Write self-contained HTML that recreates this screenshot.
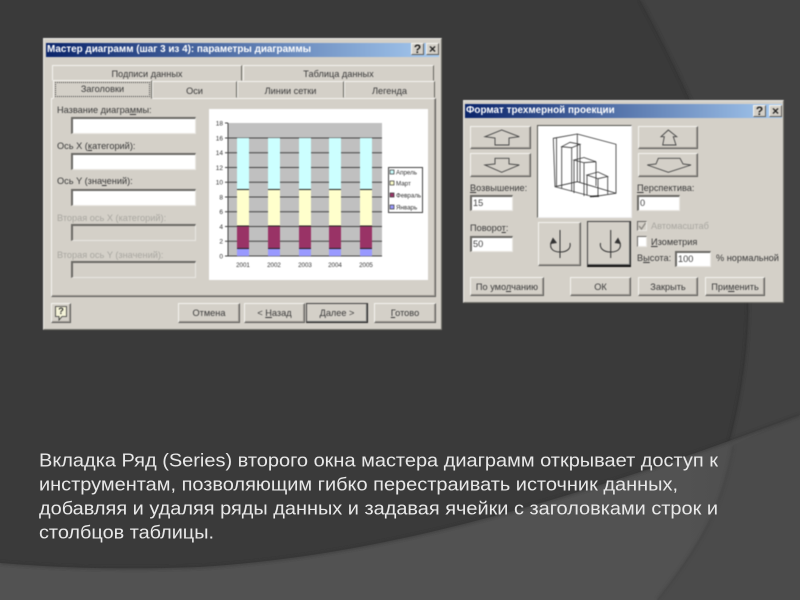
<!DOCTYPE html>
<html lang="ru">
<head>
<meta charset="utf-8">
<title>Слайд</title>
<style>
html,body{margin:0;padding:0;width:800px;height:600px;overflow:hidden;background:#3a3a3a}
#bg{position:absolute;left:0;top:0}
#ui{position:absolute;left:0;top:0;width:800px;height:600px;filter:blur(.6px);font-family:"Liberation Sans",sans-serif;font-size:9.2px;color:#3a3a3a}
#ui div{position:absolute;box-sizing:border-box}
.dlg{background:#d4d0c8;border:1px solid;border-color:#ecebe6 #77756f #77756f #ecebe6}
.tb{color:#fff;font-weight:bold;font-size:9.9px;line-height:14px;padding-left:1px;white-space:nowrap;overflow:hidden}
.b{background:#d4d0c8;border:1px solid;border-color:#f4f3ef #5f5e5a #5f5e5a #f4f3ef;box-shadow:inset -1px -1px 0 #a09d96;text-align:center;white-space:nowrap}
.d{border:1px solid;border-color:#444 #222 #222 #444;box-shadow:inset -1px -1px 0 #777}
.i{background:#fff;border:1px solid;border-color:#6b6a66 #e9e7e2 #e9e7e2 #6b6a66;border-top-width:2px;border-left-width:2px;padding-left:1px;line-height:13px;color:#444}
.g{background:#d4d0c8}
.l{white-space:nowrap;line-height:11px}
.n{color:#a9a7a1}
.t{background:#d4d0c8;border:1px solid;border-color:#f4f3ef #67665f #d4d0c8 #f4f3ef;text-align:center;white-space:nowrap}
.x{background:#d4d0c8;border:1px solid;border-color:#f4f3ef #5f5e5a #5f5e5a #f4f3ef;text-align:center;font-weight:bold;line-height:11px;font-size:12px;color:#222}
#ui svg{position:absolute;left:0;top:0}
#tx{position:absolute;left:0;top:0}
</style>
</head>
<body>
<svg id="bg" width="800" height="600" viewBox="0 0 800 600">
<defs>
<filter id="f1"><feGaussianBlur stdDeviation="1.6"/></filter>
<clipPath id="cb"><path d="M0,563C60,568 120,570 200,567C400,555 600,490 800,415L800,600L0,600Z"/></clipPath>
<linearGradient id="gb" x1="0" x2="1" y1="0" y2="0"><stop offset="0" stop-color="#525252"/><stop offset=".85" stop-color="#525252"/><stop offset="1" stop-color="#4c4c4c"/></linearGradient>
</defs>
<rect width="800" height="600" fill="#3a3a3a"/>
<path d="M640,0C700,110 750,230 748,310C746,400 720,510 657,600L800,600L800,0Z" fill="#424242"/>
<path d="M640,0C700,110 750,230 748,310C746,400 720,510 657,600" fill="none" stroke="#2f2f2f" stroke-width="1.5" filter="url(#f1)"/>
<path d="M0,563C60,568 120,570 200,567C400,555 600,490 800,415L800,600L0,600Z" fill="url(#gb)"/>
<g clip-path="url(#cb)"><path d="M733,445C720,510 700,545 657,600L800,600L800,415Z" fill="#4b4b4b"/>
<path d="M733,445C722,510 700,545 657,600" fill="none" stroke="#414141" stroke-width="1.5" filter="url(#f1)"/></g>
<path d="M0,563C60,568 120,570 200,567C400,555 600,490 800,415" fill="none" stroke="#303030" stroke-width="1.5" filter="url(#f1)"/>
</svg>

<div id="ui">
<!-- Dialog 1 -->
<div class="dlg" style="left:43px;top:38px;width:399px;height:292px"></div>
<div class="tb" style="left:46px;top:43px;width:393px;height:14px;background:linear-gradient(90deg,#0a246a,#a6caf0)">Мастер диаграмм (шаг 3 из 4): параметры диаграммы</div>
<div class="x" style="left:411px;top:43px;width:13px;height:12px">?</div>
<div class="x" style="left:426px;top:43px;width:13px;height:12px">×</div>

<div class="t" style="left:52px;top:65px;width:190px;height:16px;line-height:16px">Подписи данных</div>
<div class="t" style="left:243px;top:65px;width:191px;height:16px;line-height:16px">Таблица данных</div>
<div class="b" style="left:51px;top:98px;width:385px;height:199px;border-top-color:#f4f3ef"></div>
<div class="t" style="left:53px;top:80px;width:99px;height:19px;line-height:17px;z-index:2"><span style="position:absolute;left:1px;top:1px;width:95px;height:15px;border:1px dotted #444;box-sizing:border-box;line-height:13px">Заголовки</span></div>
<div class="t" style="left:152px;top:81px;width:85px;height:17px;line-height:18px">Оси</div>
<div class="t" style="left:237px;top:81px;width:107px;height:17px;line-height:18px">Линии сетки</div>
<div class="t" style="left:344px;top:81px;width:91px;height:17px;line-height:18px">Легенда</div>

<div class="l" style="left:57px;top:105px">Название диагра<u>м</u>мы:</div>
<div class="i" style="left:71px;top:117px;width:125px;height:17px"></div>
<div class="l" style="left:57px;top:141px">Ось X (<u>к</u>атегорий):</div>
<div class="i" style="left:71px;top:153px;width:125px;height:17px"></div>
<div class="l" style="left:57px;top:176px">Ось Y (зна<u>ч</u>ений):</div>
<div class="i" style="left:71px;top:189px;width:125px;height:17px"></div>
<div class="l n" style="left:57px;top:213px">Вторая ось X (категорий):</div>
<div class="i g" style="left:71px;top:224px;width:125px;height:17px"></div>
<div class="l n" style="left:57px;top:250px">Вторая ось Y (значений):</div>
<div class="i g" style="left:71px;top:261px;width:125px;height:17px"></div>

<div style="left:209px;top:109px;width:219px;height:171px;background:#fff"></div>
<div class="b" style="left:51px;top:303px;width:20px;height:20px"></div>

<svg width="800" height="600" viewBox="0 0 800 600" style="font-family:'Liberation Sans',sans-serif">
<rect x="228" y="123" width="154" height="133" fill="#c0c0c0"/>
<g stroke="#444" stroke-width="1">
<path d="M225,256H382M225,241.2H382M225,226.5H382M225,211.8H382M225,197H382M225,182.2H382M225,167.5H382M225,152.8H382M225,138H382M225,123H228" fill="none"/>
<path d="M228,123V256" fill="none"/>
</g>
<g>
<rect x="237" y="248" width="12" height="8" fill="#9999ff"/><rect x="237" y="226" width="12" height="22" fill="#993366"/><rect x="237" y="189" width="12" height="37" fill="#ffffcc"/><rect x="237" y="138" width="12" height="51" fill="#ccffff"/>
<rect x="268" y="248" width="12" height="8" fill="#9999ff"/><rect x="268" y="226" width="12" height="22" fill="#993366"/><rect x="268" y="189" width="12" height="37" fill="#ffffcc"/><rect x="268" y="138" width="12" height="51" fill="#ccffff"/>
<rect x="299" y="248" width="12" height="8" fill="#9999ff"/><rect x="299" y="226" width="12" height="22" fill="#993366"/><rect x="299" y="189" width="12" height="37" fill="#ffffcc"/><rect x="299" y="138" width="12" height="51" fill="#ccffff"/>
<rect x="329" y="248" width="12" height="8" fill="#9999ff"/><rect x="329" y="226" width="12" height="22" fill="#993366"/><rect x="329" y="189" width="12" height="37" fill="#ffffcc"/><rect x="329" y="138" width="12" height="51" fill="#ccffff"/>
<rect x="360" y="248" width="12" height="8" fill="#9999ff"/><rect x="360" y="226" width="12" height="22" fill="#993366"/><rect x="360" y="189" width="12" height="37" fill="#ffffcc"/><rect x="360" y="138" width="12" height="51" fill="#ccffff"/>
</g>
<path d="M237,248.500H249M268,248.500H280M299,248.500H311M329,248.500H341M360,248.500H372M237,226H249M268,226H280M299,226H311M329,226H341M360,226H372M237,189.500H249M268,189.500H280M299,189.500H311M329,189.500H341M360,189.500H372" stroke="#222" stroke-width="1"/>
<g font-size="6.5" fill="#333" text-anchor="end">
<text x="223" y="258.500">0</text><text x="223" y="243.500">2</text><text x="223" y="229">4</text><text x="223" y="214">6</text><text x="223" y="199.500">8</text><text x="223" y="184.500">10</text><text x="223" y="170">12</text><text x="223" y="155">14</text><text x="223" y="140.500">16</text><text x="223" y="125.500">18</text>
</g>
<g font-size="6.2" fill="#333" text-anchor="middle">
<text x="243" y="267">2001</text><text x="274" y="267">2002</text><text x="305" y="267">2003</text><text x="335" y="267">2004</text><text x="366" y="267">2005</text>
</g>
<rect x="388.500" y="167.500" width="34" height="45" fill="#fff" stroke="#444"/>
<rect x="390" y="170" width="4" height="4" fill="#ccffff" stroke="#333" stroke-width=".7"/>
<rect x="390" y="181" width="4" height="4" fill="#ffffcc" stroke="#333" stroke-width=".7"/>
<rect x="390" y="193" width="4" height="4" fill="#993366" stroke="#333" stroke-width=".7"/>
<rect x="390" y="205" width="4" height="4" fill="#9999ff" stroke="#333" stroke-width=".7"/>
<g font-size="6.2" fill="#333">
<text x="396" y="174.500">Апрель</text><text x="396" y="185.500">Март</text><text x="396" y="197.500">Февраль</text><text x="396" y="209.500">Январь</text>
</g>
<path d="M55.500,306.500H66.500V316.500H62L59,320V316.500H55.500Z" fill="#f4f3d8" stroke="#333" stroke-width=".8"/>
</svg>

<div class="l" style="left:55px;top:306px;width:12px;text-align:center;font-weight:bold;color:#333">?</div>
<div class="b" style="left:178px;top:303px;width:62px;height:20px;line-height:19px">Отмена</div>
<div class="b" style="left:244px;top:303px;width:61px;height:20px;line-height:19px">&lt; <u>Н</u>азад</div>
<div class="b d" style="left:306px;top:303px;width:62px;height:20px;line-height:18px"><u>Д</u>алее &gt;</div>
<div class="b" style="left:374px;top:303px;width:62px;height:20px;line-height:19px"><u>Г</u>отово</div>

<!-- Dialog 2 -->
<div class="dlg" style="left:463px;top:100px;width:321px;height:203px"></div>
<div class="tb" style="left:465px;top:104px;width:317px;height:14px;background:linear-gradient(90deg,#0a246a,#a6caf0)">Формат трехмерной проекции</div>
<div class="x" style="left:753px;top:105px;width:13px;height:12px">?</div>
<div class="x" style="left:769px;top:105px;width:13px;height:12px">×</div>

<div class="b" style="left:470px;top:126px;width:61px;height:23px"></div>
<div class="b" style="left:470px;top:153px;width:61px;height:24px"></div>
<div class="b" style="left:638px;top:126px;width:60px;height:23px"></div>
<div class="b" style="left:638px;top:153px;width:60px;height:24px"></div>
<div class="l" style="left:470px;top:183px"><u>В</u>озвышение:</div>
<div class="i" style="left:470px;top:195px;width:43px;height:16px">15</div>
<div class="l" style="left:470px;top:223px">Поворо<u>т</u>:</div>
<div class="i" style="left:470px;top:236px;width:43px;height:16px">50</div>
<div style="left:537px;top:125px;width:95px;height:93px;background:#fff;border:1px solid;border-color:#55544f #eee #eee #55544f"></div>
<div class="b" style="left:538px;top:222px;width:43px;height:44px"></div>
<div class="b d" style="left:587px;top:221px;width:44px;height:46px;border-width:1px 1px 2px 1px;border-color:#444 #222 #111 #444"></div>
<div class="l" style="left:637px;top:183px"><u>П</u>ерспектива:</div>
<div class="i" style="left:637px;top:195px;width:43px;height:16px">0</div>
<div class="i" style="left:637px;top:221px;width:10px;height:10px;background:#d4d0c8;border-width:1px"></div>
<div class="l n" style="left:651px;top:221px">Автомасштаб</div>
<div class="i" style="left:637px;top:236px;width:10px;height:11px;border-width:1px"></div>
<div class="l" style="left:651px;top:237px"><u>И</u>зометрия</div>
<div class="l" style="left:637px;top:253px">В<u>ы</u>сота:</div>
<div class="i" style="left:675px;top:251px;width:36px;height:16px">100</div>
<div class="l" style="left:716px;top:253px">% нормальной</div>
<div class="b" style="left:470px;top:277px;width:74px;height:19px;line-height:18px">По умо<u>л</u>чанию</div>
<div class="b" style="left:570px;top:277px;width:61px;height:19px;line-height:18px">ОК</div>
<div class="b" style="left:638px;top:277px;width:60px;height:19px;line-height:18px">Закрыть</div>
<div class="b" style="left:705px;top:277px;width:60px;height:19px;line-height:18px">При<u>м</u>енить</div>

<svg width="800" height="600" viewBox="0 0 800 600">
<g fill="none" stroke="#444" stroke-width=".9">
<path d="M485,136.700L501.700,130L519.300,136.700L509,138V145H495V138Z"/>
<path d="M485,165L495,164V158.300H509V164L519.300,165L501.700,172.300Z"/>
<path d="M668.300,130L661,136.700H664.300L662.700,145H676L673.300,136.700H676.700Z"/>
<path d="M647.300,165L656,164L658.300,158.300H680L683,164L691,165L668.300,172.300Z"/>
</g>
<g fill="none" stroke="#333" stroke-width=".8">
<path d="M553.300,138.300L577.300,134L616,144.300V193.300L593.300,196.700L555,186.700Z"/>
<path d="M556.500,137.500V186M577.300,134V181.700M555,186.700L577.300,181.700L616,193.300"/>
<path d="M561.700,146.700L570,142.300L580,144.300L571.700,147.700ZM561.700,146.700V188.300M571.700,147.700V191M580,144.300V182"/>
<path d="M574,160L584,157.500L596,161.700L584,162.700ZM574,160V193M584,162.700V196M596,161.700V186"/>
<path d="M587,175L598,172L607.700,176.500L598,178.700ZM587,175V195M598,178.700V197M607.700,176.500V194"/>
</g>
<path d="M590,196.500L599,196" stroke="#222" stroke-width="1.500"/>
<g fill="none" stroke="#333" stroke-width="1">
<path d="M560,230V258"/>
<path d="M552.500,240C548,247 552,252 560,252C568,252 571,248 570,243"/>
<path d="M550.500,244L553,238.500L556.500,243" fill="#333"/>
<path d="M610.700,230V258"/>
<path d="M618.500,240C623,247 619,252 610.700,252C603,252 599.500,248 600.500,243"/>
<path d="M615,243L618,238.500L620.500,244" fill="#333"/>
</g>
<path d="M639,226L641.500,229L645.500,223" fill="none" stroke="#8a8882" stroke-width="1.300"/>
</svg>
</div>

<svg id="tx" width="800" height="600" viewBox="0 0 800 600" style="filter:blur(.3px)">
<g font-family="'Liberation Sans',sans-serif" font-size="18.800" fill="#e8e8e8">
<text x="39" y="466.500" textLength="679" lengthAdjust="spacingAndGlyphs">Вкладка Ряд (Series) второго окна мастера диаграмм открывает доступ к</text>
<text x="39" y="490.500" textLength="639" lengthAdjust="spacingAndGlyphs">инструментам, позволяющим гибко перестраивать источник данных,</text>
<text x="39" y="514.500" textLength="679" lengthAdjust="spacingAndGlyphs">добавляя и удаляя ряды данных и задавая ячейки с заголовками строк и</text>
<text x="39" y="538.500" textLength="175" lengthAdjust="spacingAndGlyphs">столбцов таблицы.</text>
</g>
</svg>
</body>
</html>
